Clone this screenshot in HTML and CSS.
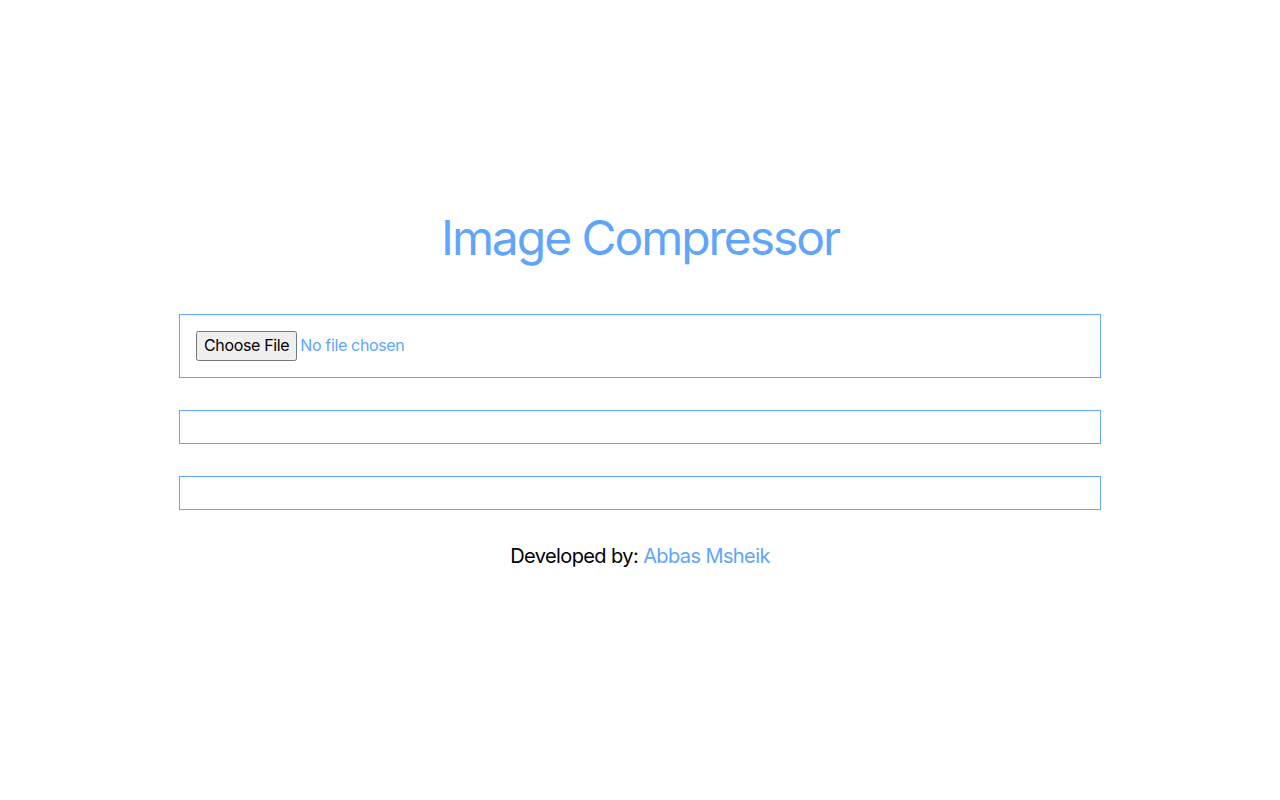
FILE: index.html
```html
<!DOCTYPE html>
<html lang="en">
<head>
<meta charset="utf-8">
<title>Image Compressor</title>
<link rel="stylesheet" href="styles.css">
</head>
<body>
<main class="page">
  <h1 class="title">Image Compressor</h1>
  <div class="box box-input">
    <input type="file" class="file" accept="image/*">
  </div>
  <div class="box"></div>
  <div class="box"></div>
  <p class="credit">Developed by: <a class="author" href="#">Abbas Msheik</a></p>
</main>
</body>
</html>
```
FILE: styles.css
```css
* { box-sizing: border-box; }
html, body { margin: 0; padding: 0; background: #fff; }
body {
  font-family: Inter, "Noto Sans", sans-serif;
  color: #000;
}
.page {
  width: 922px;
  margin: 0 auto;
  padding-top: 214px;
  display: flex;
  flex-direction: column;
  gap: 32px;
}
.title {
  margin: 0 0 20px;
  text-align: center;
  font-size: 48px;
  line-height: 48px;
  font-weight: 400;
  letter-spacing: -0.043em;
  color: #60a5fa;
}
.box {
  border: 1px solid #60a5fa;
  padding: 16px;
  min-height: 34px;
}
.file {
  font-family: inherit;
  font-size: 16px;
  line-height: 22px;
  letter-spacing: -0.022em;
  color: #60a5fa;
  display: block;
  height: 30px;
}
.file::file-selector-button {
  font-family: inherit;
  font-size: 16px;
  letter-spacing: -0.022em;
  color: #000;
  height: 30px;
  padding: 0 6px 2px;
  margin-right: 3px;
}
.credit {
  margin: 0;
  text-align: center;
  font-size: 20px;
  line-height: 28px;
  letter-spacing: -0.03em;
}
.author {
  color: #60a5fa;
  text-decoration: none;
}
```
